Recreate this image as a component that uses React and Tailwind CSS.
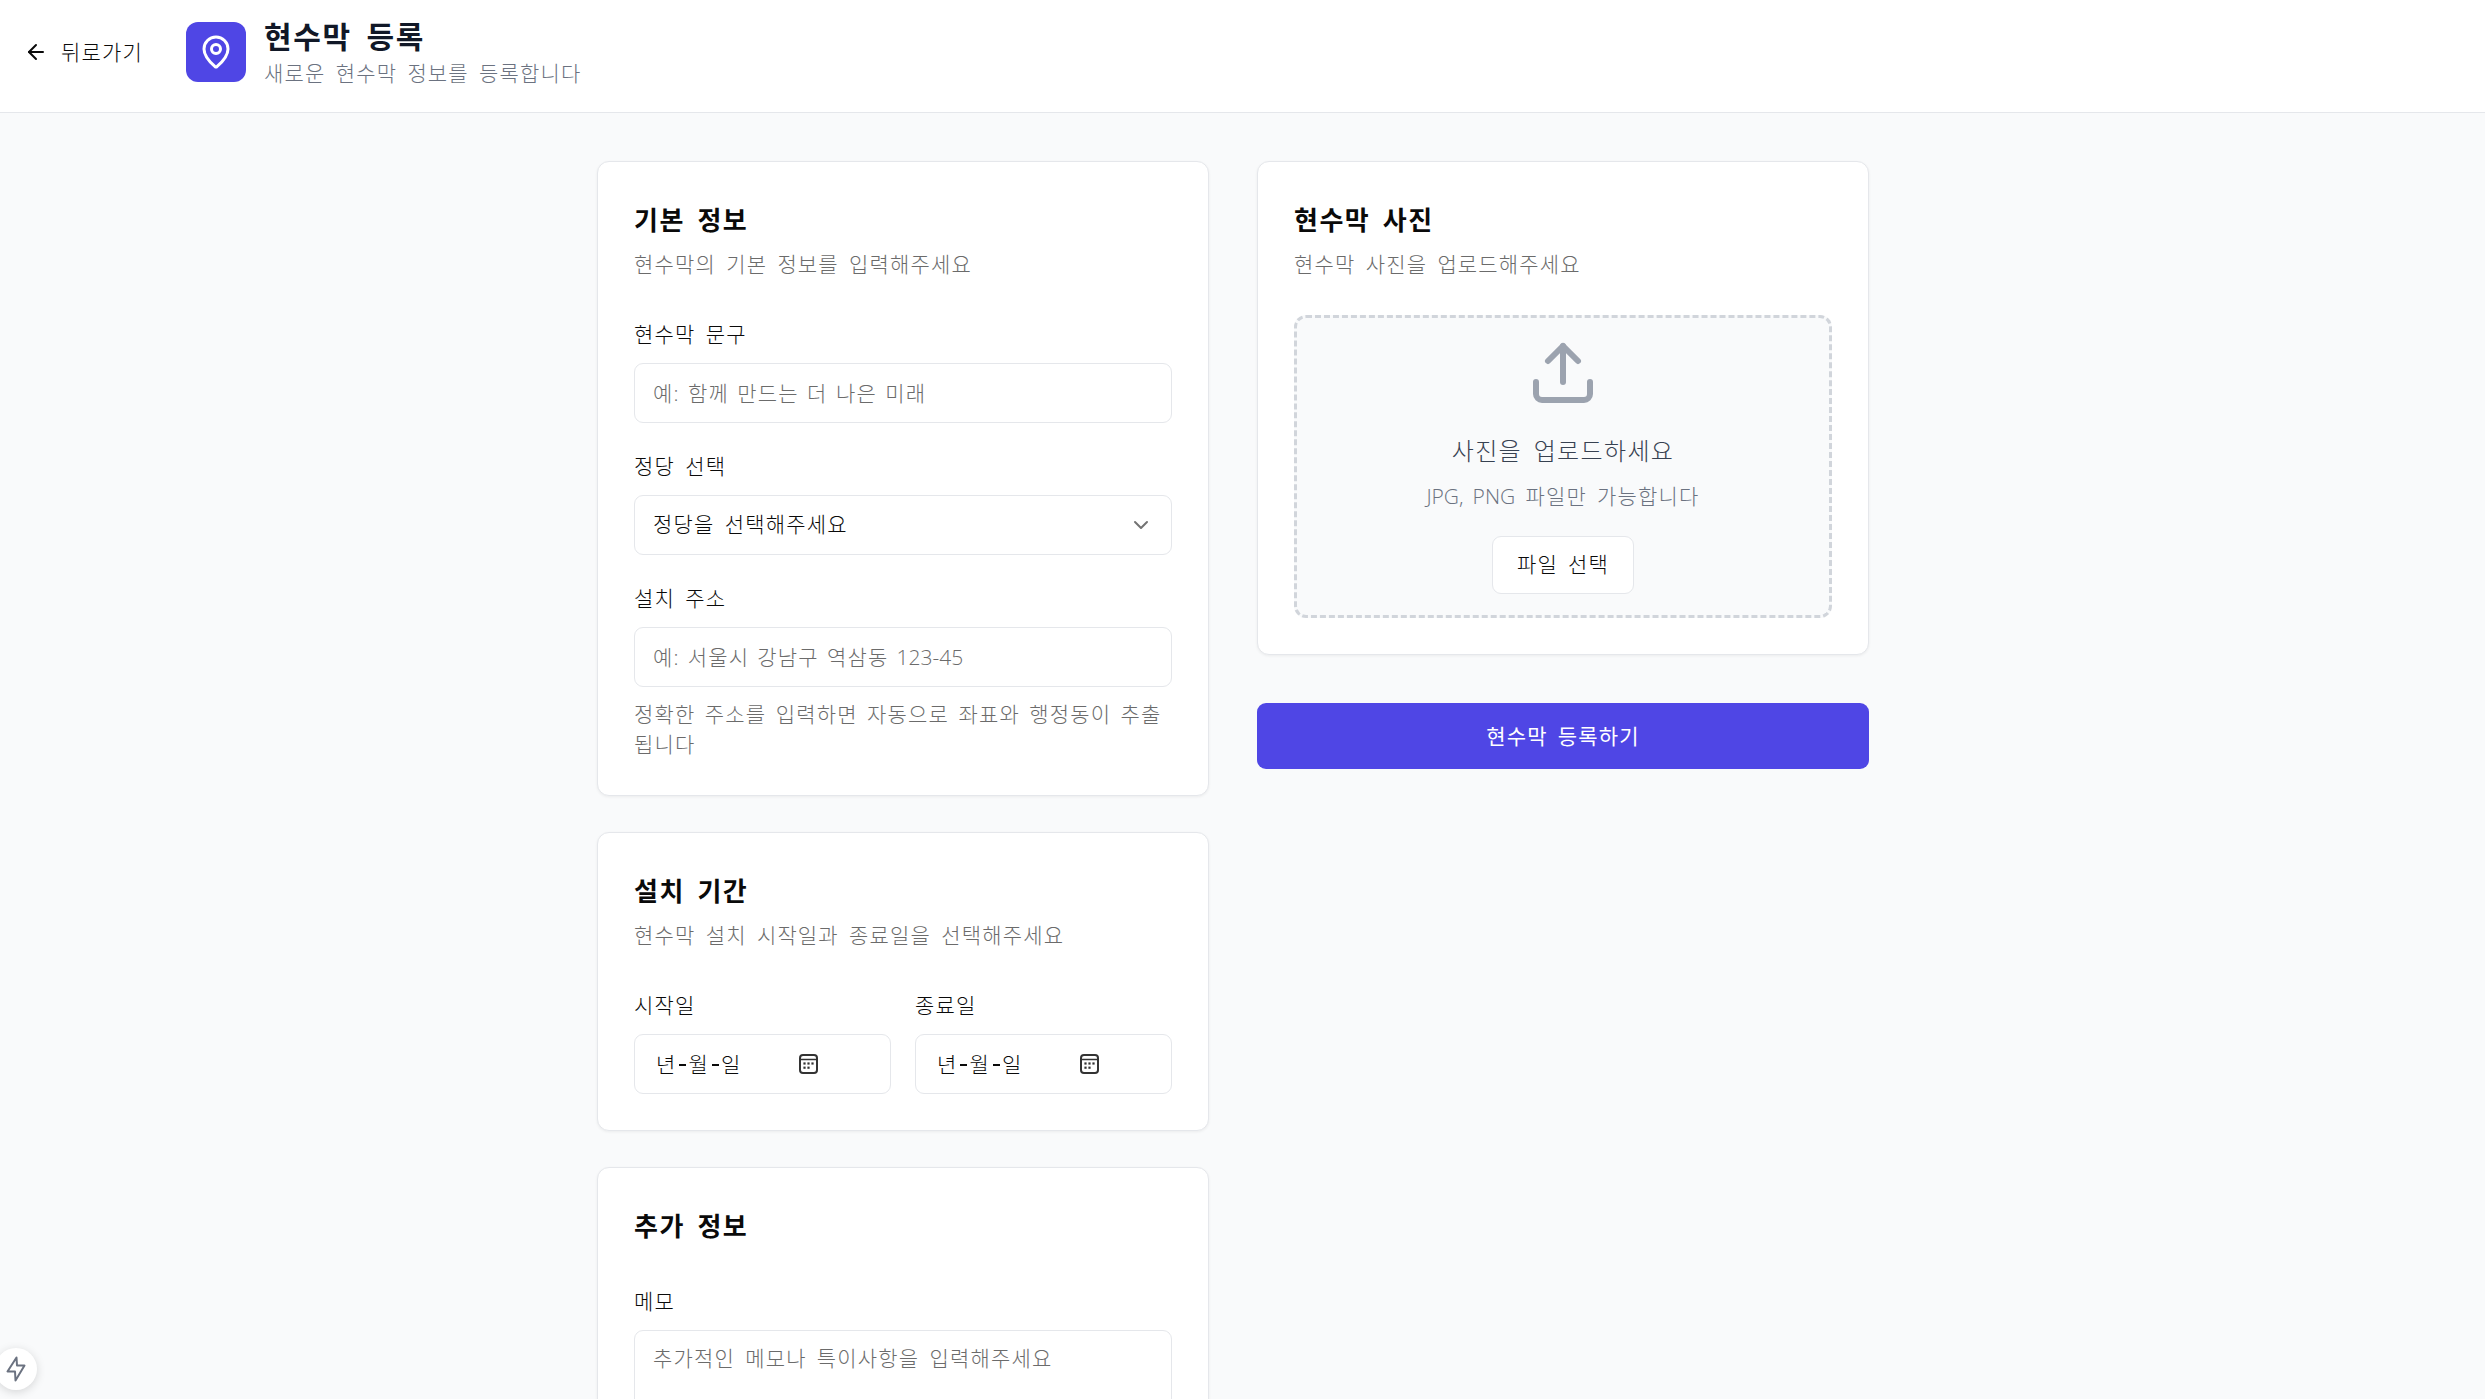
import React from "react";
import { ArrowLeft, MapPin, ChevronDown, Upload } from "lucide-react";

const cardCls = "bg-white border border-[#e5e7eb] rounded-[12px] shadow-[0_1px_3px_rgba(0,0,0,0.06)] p-[36px]";
const labelCls = "block text-[21px] leading-[30px] text-[#0a0a0a] pt-[1px] mb-[14px] box-content";
const inputCls = "block w-full h-[60px] rounded-[9px] border border-[#e5e7eb] bg-white px-[18px] text-[21px] text-[#0a0a0a] placeholder:text-[#6b6b6b] outline-none";

function CardHead({ title, desc, className }) {
  return (
    <div className={className}>
      <h2 className="text-[26px] leading-[44px] font-bold text-[#0a0a0a]">{title}</h2>
      {desc && <p className="mt-[7px] text-[21px] leading-[30px] text-[#6b6b6b]">{desc}</p>}
    </div>
  );
}

function CalendarIcon() {
  return (
    <svg width="19" height="20" viewBox="0 0 19 20" fill="none" className="text-[#333333]">
      <rect x="1" y="1" width="17" height="18" rx="3" stroke="currentColor" strokeWidth="2" />
      <path d="M1.5 5.5H17.5" stroke="currentColor" strokeWidth="1.5" />
      <g fill="currentColor">
        <rect x="4.4" y="8.4" width="2.2" height="2.2" />
        <rect x="8.4" y="8.4" width="2.2" height="2.2" />
        <rect x="12.4" y="8.4" width="2.2" height="2.2" />
        <rect x="4.4" y="12.6" width="2.2" height="2.2" />
        <rect x="8.4" y="12.6" width="2.2" height="2.2" />
      </g>
    </svg>
  );
}

function DateField({ label }) {
  return (
    <div>
      <span className={labelCls}>{label}</span>
      <div className="flex items-center h-[60px] rounded-[9px] border border-[#e5e7eb] bg-white pl-[21px] text-[21px] text-[#0a0a0a]">
        <span className="w-[143px] pt-[2px] flex items-center gap-[2.5px]">
          <span>년</span><span className="w-[7px] h-[2px] bg-[#0a0a0a]"></span>
          <span>월</span><span className="w-[7px] h-[2px] bg-[#0a0a0a]"></span>
          <span>일</span>
        </span>
        <CalendarIcon />
      </div>
    </div>
  );
}

export default function App() {
  return (
    <div
      className="h-[1399px] overflow-hidden bg-[#f9fafb] font-light [&_*]:tracking-[0.056em] [&_*]:[word-spacing:0.17em]"
      style={{ fontFamily: '"Open Sans", "Noto Sans CJK KR", sans-serif' }}
    >
      <header className="h-[113px] bg-white border-b border-[#e5e7eb] flex items-center pl-[24px] pb-[8px]">
        <button className="flex items-center gap-[13px] text-[21px] text-[#0a0a0a] w-[162px]">
          <ArrowLeft className="w-[24px] h-[24px]" strokeWidth={2} />
          <span className="mt-[2px]">뒤로가기</span>
        </button>
        <div className="w-[60px] h-[60px] rounded-[12px] bg-[#4f46e5] flex items-center justify-center text-white">
          <MapPin className="w-[36px] h-[36px]" strokeWidth={2} />
        </div>
        <div className="ml-[18px]">
          <h1 className="text-[30px] leading-[42px] font-bold text-[#111827]">현수막 등록</h1>
          <p className="text-[21px] leading-[30px] text-[#6b7280]">새로운 현수막 정보를 등록합니다</p>
        </div>
      </header>

      <main className="w-[1272px] ml-[597px] pt-[48px] grid grid-cols-2 gap-[48px] items-start">
        <div className="flex flex-col gap-[36px]">
          <section className={cardCls}>
            <CardHead className="mb-[39px]" title="기본 정보" desc="현수막의 기본 정보를 입력해주세요" />
            <div className="flex flex-col gap-[27px]">
              <div>
                <label className={labelCls}>현수막 문구</label>
                <input className={inputCls + " [word-spacing:0.08em]!"} placeholder="예: 함께 만드는 더 나은 미래" />
              </div>
              <div>
                <label className={labelCls}>정당 선택</label>
                <div className="flex items-center justify-between h-[60px] rounded-[9px] border border-[#e5e7eb] bg-white px-[18px] text-[21px] text-[#0a0a0a]">
                  <span>정당을 선택해주세요</span>
                  <ChevronDown className="w-[24px] h-[24px] text-[#737373]" />
                </div>
              </div>
              <div>
                <label className={labelCls}>설치 주소</label>
                <div className="flex items-center h-[60px] rounded-[9px] border border-[#e5e7eb] bg-white px-[18px] pt-[2px] text-[21px] text-[#6b6b6b]">
                  <span className="[word-spacing:0.07em]!">예: 서울시 강남구 역삼동 <span className="tracking-normal!">123-45</span></span>
                </div>
                <p className="mt-[12px] text-[21px] leading-[30px] text-[#6b6b6b] [word-spacing:0.13em]!">정확한 주소를 입력하면 자동으로 좌표와 행정동이 추출됩니다</p>
              </div>
            </div>
          </section>

          <section className={cardCls}>
            <CardHead className="mb-[39px]" title="설치 기간" desc="현수막 설치 시작일과 종료일을 선택해주세요" />
            <div className="grid grid-cols-2 gap-[24px]">
              <DateField label="시작일" />
              <DateField label="종료일" />
            </div>
          </section>

          <section className={cardCls}>
            <CardHead className="mb-[37px]" title="추가 정보" />
            <label className={labelCls}>메모</label>
            <textarea
              className="block w-full h-[140px] rounded-[9px] border border-[#e5e7eb] bg-white px-[18px] py-[12px] text-[21px] leading-[30px] placeholder:text-[#6b6b6b] outline-none resize-none"
              placeholder="추가적인 메모나 특이사항을 입력해주세요"
            />
          </section>
        </div>

        <div className="flex flex-col gap-[48px]">
          <section className={cardCls}>
            <CardHead className="mb-[36px]" title="현수막 사진" desc="현수막 사진을 업로드해주세요" />
            <div className="border-[3px] border-dashed border-[#d1d5db] rounded-[12px] bg-[#f9fafb] pt-[19px] pb-[21px] flex flex-col items-center">
              <Upload className="w-[72px] h-[72px] text-[#9ca3af]" strokeWidth={2} />
              <p className="mt-[24px] text-[24px] leading-[36px] text-[#374151]">사진을 업로드하세요</p>
              <p className="mt-[12px] text-[21px] leading-[30px] text-[#6b7280]"><span className="tracking-normal!">JPG, PNG</span> 파일만 가능합니다</p>
              <button className="mt-[25px] h-[58px] w-[142px] rounded-[9px] border border-[#e5e7eb] bg-white text-[21px] text-[#0a0a0a]">파일 선택</button>
            </div>
          </section>
          <button className="h-[66px] rounded-[9px] bg-[#4f46e5] pt-[2px] text-white text-[21px] font-normal">현수막 등록하기</button>
        </div>
      </main>

      <div className="fixed left-[-5px] bottom-[9px] w-[42px] h-[42px] rounded-full bg-white shadow-[0_2px_10px_rgba(0,0,0,0.15)] flex items-center justify-center">
        <svg width="20" height="26" viewBox="0 0 20 26" fill="none" stroke="#6b7280" strokeWidth="2" strokeLinejoin="round">
          <path d="M10.5 1.5L1.5 15.5H9L9.5 24.5L18.5 9.5H11Z" />
        </svg>
      </div>
    </div>
  );
}
